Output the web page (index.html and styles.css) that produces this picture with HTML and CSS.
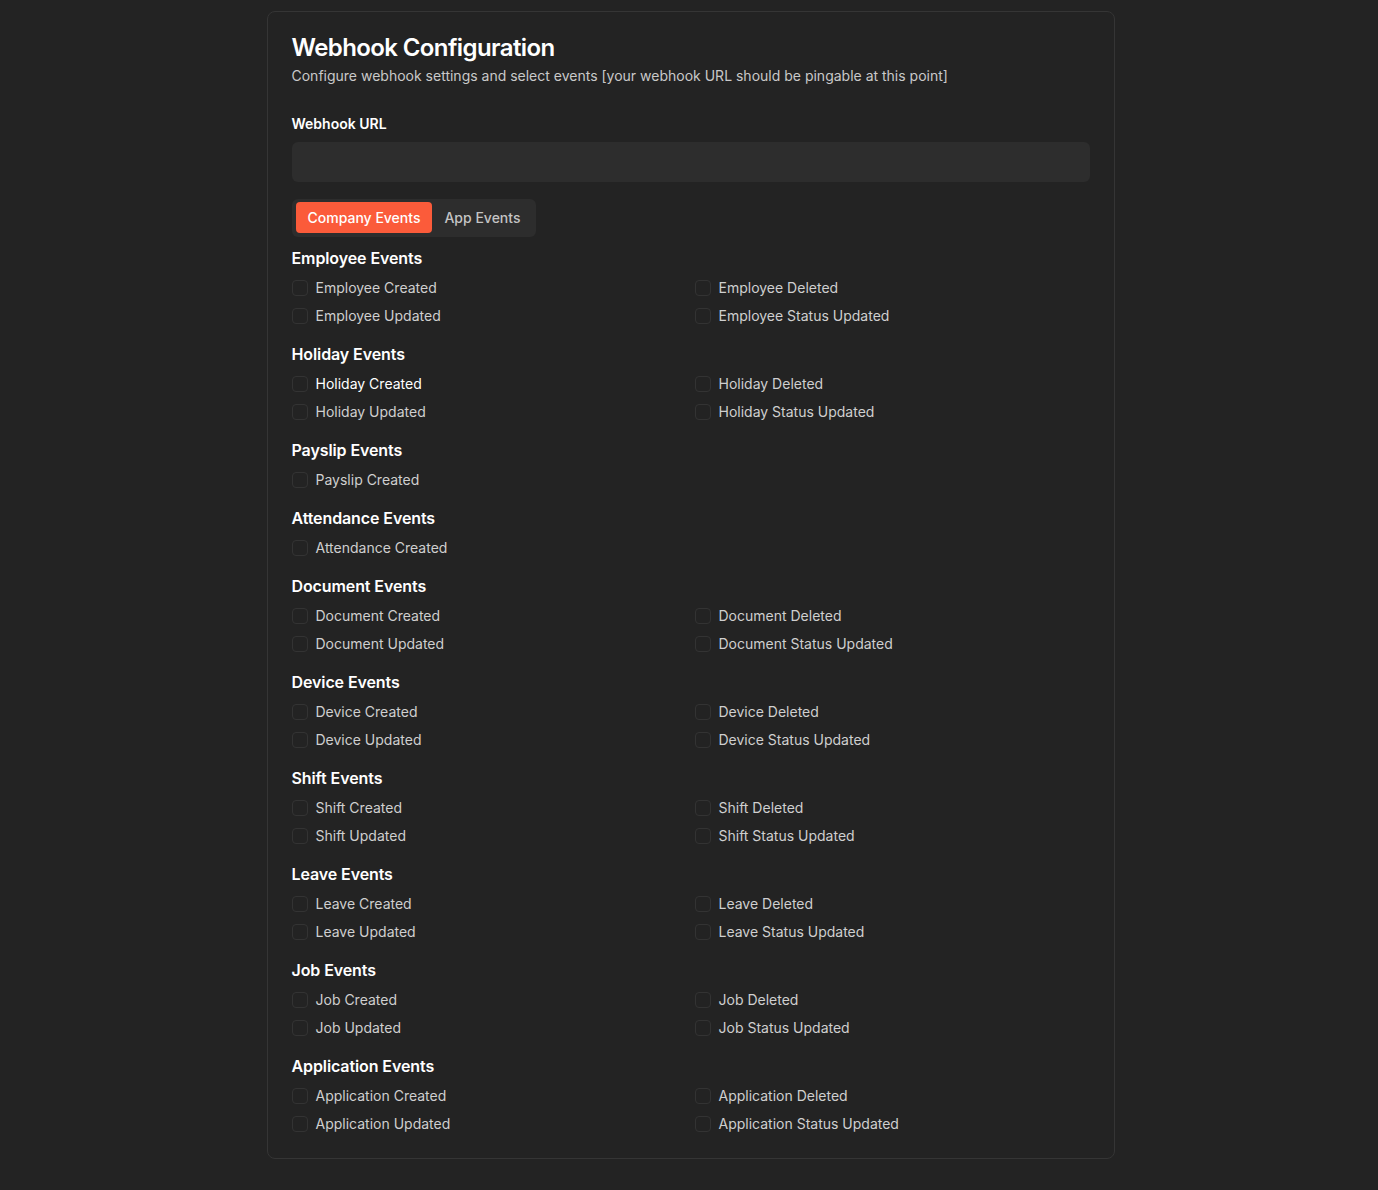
FILE: index.html
```html
<!DOCTYPE html>
<html lang="en">
<head>
<meta charset="utf-8">
<title>Webhook Configuration</title>
<link rel="stylesheet" href="styles.css">
</head>
<body>
<div class="page">
  <div class="card">
    <div class="card-header">
      <h1 class="title">Webhook Configuration</h1>
      <p class="desc">Configure webhook settings and select events [your webhook URL should be pingable at this point]</p>
    </div>
    <div class="card-content">
      <label class="field-label">Webhook URL</label>
      <div class="input"></div>
      <div class="tabs">
        <button class="tab active">Company Events</button>
        <button class="tab">App Events</button>
      </div>

      <section class="group">
        <h2 class="group-title">Employee Events</h2>
        <div class="grid">
          <label class="item"><span class="cb"></span>Employee Created</label>
          <label class="item"><span class="cb"></span>Employee Deleted</label>
          <label class="item"><span class="cb"></span>Employee Updated</label>
          <label class="item"><span class="cb"></span>Employee Status Updated</label>
        </div>
      </section>

      <section class="group">
        <h2 class="group-title">Holiday Events</h2>
        <div class="grid">
          <label class="item hover"><span class="cb"></span>Holiday Created</label>
          <label class="item"><span class="cb"></span>Holiday Deleted</label>
          <label class="item"><span class="cb"></span>Holiday Updated</label>
          <label class="item"><span class="cb"></span>Holiday Status Updated</label>
        </div>
      </section>

      <section class="group">
        <h2 class="group-title">Payslip Events</h2>
        <div class="grid">
          <label class="item"><span class="cb"></span>Payslip Created</label>
        </div>
      </section>

      <section class="group">
        <h2 class="group-title">Attendance Events</h2>
        <div class="grid">
          <label class="item"><span class="cb"></span>Attendance Created</label>
        </div>
      </section>

      <section class="group">
        <h2 class="group-title">Document Events</h2>
        <div class="grid">
          <label class="item"><span class="cb"></span>Document Created</label>
          <label class="item"><span class="cb"></span>Document Deleted</label>
          <label class="item"><span class="cb"></span>Document Updated</label>
          <label class="item"><span class="cb"></span>Document Status Updated</label>
        </div>
      </section>

      <section class="group">
        <h2 class="group-title">Device Events</h2>
        <div class="grid">
          <label class="item"><span class="cb"></span>Device Created</label>
          <label class="item"><span class="cb"></span>Device Deleted</label>
          <label class="item"><span class="cb"></span>Device Updated</label>
          <label class="item"><span class="cb"></span>Device Status Updated</label>
        </div>
      </section>

      <section class="group">
        <h2 class="group-title">Shift Events</h2>
        <div class="grid">
          <label class="item"><span class="cb"></span>Shift Created</label>
          <label class="item"><span class="cb"></span>Shift Deleted</label>
          <label class="item"><span class="cb"></span>Shift Updated</label>
          <label class="item"><span class="cb"></span>Shift Status Updated</label>
        </div>
      </section>

      <section class="group">
        <h2 class="group-title">Leave Events</h2>
        <div class="grid">
          <label class="item"><span class="cb"></span>Leave Created</label>
          <label class="item"><span class="cb"></span>Leave Deleted</label>
          <label class="item"><span class="cb"></span>Leave Updated</label>
          <label class="item"><span class="cb"></span>Leave Status Updated</label>
        </div>
      </section>

      <section class="group">
        <h2 class="group-title">Job Events</h2>
        <div class="grid">
          <label class="item"><span class="cb"></span>Job Created</label>
          <label class="item"><span class="cb"></span>Job Deleted</label>
          <label class="item"><span class="cb"></span>Job Updated</label>
          <label class="item"><span class="cb"></span>Job Status Updated</label>
        </div>
      </section>

      <section class="group">
        <h2 class="group-title">Application Events</h2>
        <div class="grid">
          <label class="item"><span class="cb"></span>Application Created</label>
          <label class="item"><span class="cb"></span>Application Deleted</label>
          <label class="item"><span class="cb"></span>Application Updated</label>
          <label class="item"><span class="cb"></span>Application Status Updated</label>
        </div>
      </section>
    </div>
  </div>
</div>
</body>
</html>
```
FILE: styles.css
```css
* { box-sizing: border-box; }
html, body {
  margin: 0;
  padding: 0;
  background: #232323;
  font-family: Inter, "Noto Sans", sans-serif;
  color: #e5e5e5;
}
.page {
  display: flex;
  justify-content: center;
  padding-top: 11px;
  padding-bottom: 32px;
}
.card {
  width: 848px;
  border: 1px solid #353535;
  border-radius: 8px;
  background: #232323;
  margin-left: 3px;
}
.card-header {
  padding: 24px 24px 24px;
  display: flex;
  flex-direction: column;
  gap: 6px;
}
.title {
  margin: 0;
  font-size: 24px;
  line-height: 24px;
  font-weight: 600;
  letter-spacing: -0.6px;
  color: #ffffff;
}
.desc {
  margin: 0;
  font-size: 14px;
  line-height: 20px;
  color: #c9c9c9;
}
.card-content {
  padding: 0 24px 24px;
}
.field-label {
  display: block;
  font-size: 14px;
  line-height: 16px;
  font-weight: 600;
  color: #ffffff;
  margin-top: 6px;
}
.input {
  margin-top: 10px;
  height: 40px;
  background: #2d2d2d;
  border-radius: 6px;
}
.tabs {
  margin-top: 17px;
  display: inline-flex;
  padding: 3px 4px 4px;
  gap: 0;
  background: #2d2d2d;
  border-radius: 6px;
  height: 38px;
}
.tab {
  border: 0;
  background: transparent;
  font-family: inherit;
  font-size: 14px;
  font-weight: 500;
  color: #c4c4c4;
  padding: 0 12px;
  height: 31px;
  border-radius: 4px;
  cursor: pointer;
}
.tab.active {
  background: #fb5b3a;
  color: #ffffff;
}
.group {
  margin-top: 9px;
}
.group + .group {
  margin-top: 16px;
}
.group-title {
  margin: 0 0 8px;
  font-size: 16px;
  line-height: 24px;
  font-weight: 600;
  letter-spacing: -0.1px;
  color: #ffffff;
}
.grid {
  display: grid;
  grid-template-columns: 1fr 1fr;
  column-gap: 8px;
  row-gap: 8px;
}
.item {
  display: flex;
  align-items: center;
  gap: 8px;
  height: 20px;
  font-size: 14px;
  line-height: 20px;
  color: #cfcfcf;
}
.item.hover { color: #ffffff; }
.cb {
  width: 16px;
  height: 16px;
  flex: none;
  border: 1px solid #333333;
  border-radius: 4px;
  background: transparent;
}
```
